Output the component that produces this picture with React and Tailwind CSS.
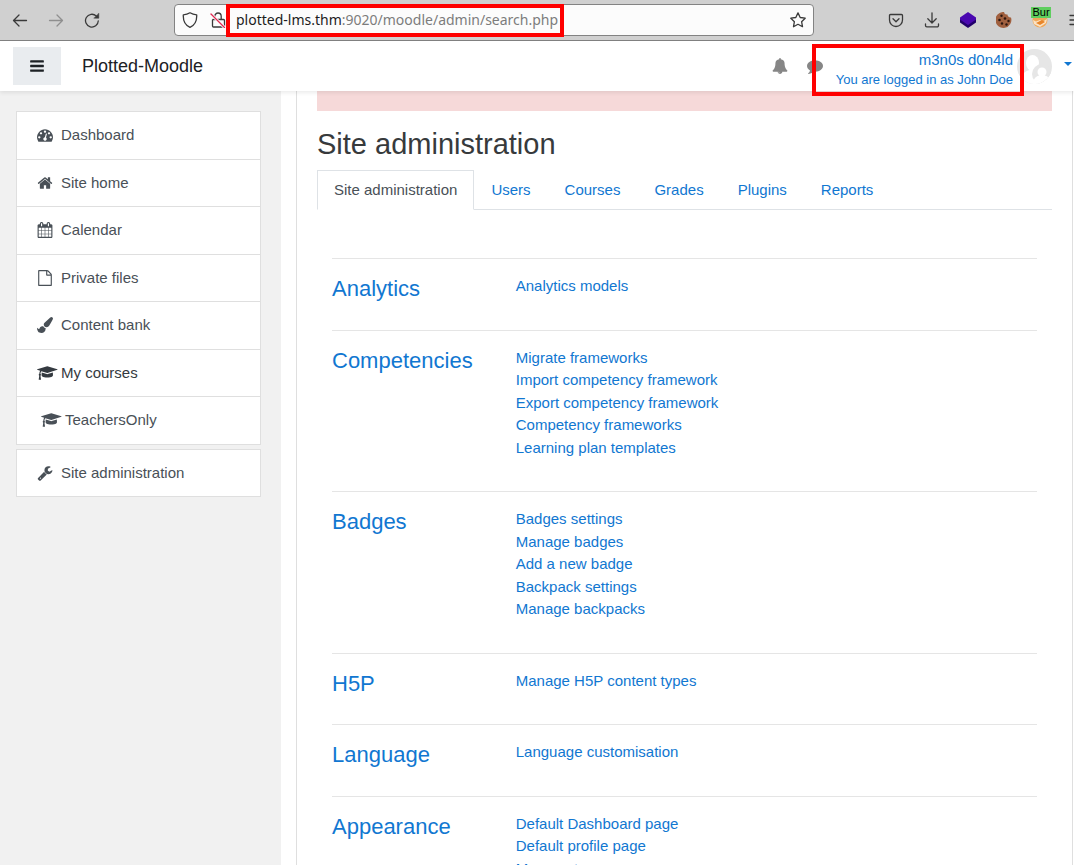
const ICONS = {
  bars: [1792, 'M1664 1344v128q0 26-19 45t-45 19h-1408q-26 0-45-19t-19-45v-128q0-26 19-45t45-19h1408q26 0 45 19t19 45zm0-512v128q0 26-19 45t-45 19h-1408q-26 0-45-19t-19-45v-128q0-26 19-45t45-19h1408q26 0 45 19t19 45zm0-512v128q0 26-19 45t-45 19h-1408q-26 0-45-19t-19-45v-128q0-26 19-45t45-19h1408q26 0 45 19t19 45z'],
  gauge: [1792, 'M384 1152q0-53-37.5-90.5t-90.5-37.5-90.5 37.5-37.5 90.5 37.5 90.5 90.5 37.5 90.5-37.5 37.5-90.5zm192-448q0-53-37.5-90.5t-90.5-37.5-90.5 37.5-37.5 90.5 37.5 90.5 90.5 37.5 90.5-37.5 37.5-90.5zm428 481l101-382q6-26-7.5-48.5t-38.5-29.5-48 6.5-30 39.5l-101 382q-60 5-107 43.5t-63 98.5q-20 77 20 146t117 89 146-20 89-117q16-60-6-117t-72-91zm660-33q0-53-37.5-90.5t-90.5-37.5-90.5 37.5-37.5 90.5 37.5 90.5 90.5 37.5 90.5-37.5 37.5-90.5zm-640-640q0-53-37.5-90.5t-90.5-37.5-90.5 37.5-37.5 90.5 37.5 90.5 90.5 37.5 90.5-37.5 37.5-90.5zm448 192q0-53-37.5-90.5t-90.5-37.5-90.5 37.5-37.5 90.5 37.5 90.5 90.5 37.5 90.5-37.5 37.5-90.5zm320 448q0 261-141 483-19 29-54 29h-1402q-35 0-54-29-141-221-141-483 0-182 71-348t191-286 286-191 348-71 348 71 286 191 191 286 71 348z'],
  home: [1792, 'M1472 992v480q0 26-19 45t-45 19h-384v-384h-256v384h-384q-26 0-45-19t-19-45v-480q0-1 .5-3t.5-3l575-474 575 474q1 2 1 6zm223-69l-62 74q-8 9-21 11h-3q-13 0-21-7l-692-577-692 577q-12 8-24 7-13-2-21-11l-62-74q-8-10-7-23.5t11-21.5l719-599q32-26 76-26t76 26l244 204v-195q0-14 9-23t23-9h192q14 0 23 9t9 23v408l219 182q10 8 11 21.5t-7 23.5z'],
  calendar: [1792, 'M192 1664h288v-288h-288v288zm352 0h320v-288h-320v288zm-352-352h288v-320h-288v320zm352 0h320v-320h-320v320zm-352-384h288v-288h-288v288zm736 736h320v-288h-320v288zm-384-736h320v-288h-320v288zm768 736h288v-288h-288v288zm-384-352h320v-320h-320v320zm-352-864v-288q0-13-9.5-22.5t-22.5-9.5h-64q-13 0-22.5 9.5t-9.5 22.5v288q0 13 9.5 22.5t22.5 9.5h64q13 0 22.5-9.5t9.5-22.5zm736 864h288v-320h-288v320zm-384-384h320v-288h-320v288zm384 0h288v-288h-288v288zm32-480v-288q0-13-9.5-22.5t-22.5-9.5h-64q-13 0-22.5 9.5t-9.5 22.5v288q0 13 9.5 22.5t22.5 9.5h64q13 0 22.5-9.5t9.5-22.5zm384-64v1280q0 52-38 90t-90 38h-1408q-52 0-90-38t-38-90v-1280q0-52 38-90t90-38h128v-96q0-66 47-113t113-47h64q66 0 113 47t47 113v96h384v-96q0-66 47-113t113-47h64q66 0 113 47t47 113v96h128q52 0 90 38t38 90z'],
  file: [1792, 'M1596 380q28 28 48 76t20 88v1152q0 40-28 68t-68 28h-1344q-40 0-68-28t-28-68v-1600q0-40 28-68t68-28h896q40 0 88 20t76 48zm-444-244v376h376q-10-29-22-41l-313-313q-12-12-41-22zm384 1528v-1024h-416q-40 0-68-28t-28-68v-416h-768v1536h1280z'],
  brush: [1792, 'M1615 0q70 0 122.5 46.5t52.5 116.5q0 63-45 151-332 629-465 752-97 91-218 91-126 0-216.5-92.5t-90.5-219.5q0-128 92-212l638-579q59-54 130-54zm-909 1034q39 76 106.5 130t150.5 76l1 71q4 213-129.5 347t-348.5 134q-123 0-218-46.5t-152.5-127.5-86.5-183-29-220q7 5 41 30t62 44.5 59 36.5 46 17q41 0 55-37 25-66 57.5-112.5t69.5-76 88-47.5 103-25.5 125-10.5z'],
  cap: [2304, 'M1774 836l18 316q4 69-82 128t-235 93.5-323 34.5-323-34.5-235-93.5-82-128l18-316 574 181q22 7 48 7t48-7zm530-324q0 23-22 31l-1120 352q-4 1-10 1t-10-1l-652-206q-43 34-71 111.5t-34 178.5q63 36 63 109 0 69-58 107l58 433q2 14-8 25-9 11-24 11h-192q-15 0-24-11-10-11-8-25l58-433q-58-38-58-107 0-73 65-111 11-207 98-330l-333-104q-22-8-22-31t22-31l1120-352q4-1 10-1t10 1l1120 352q22 8 22 31z'],
  wrench: [1792, 'M448 1472q0-26-19-45t-45-19-45 19-19 45 19 45 45 19 45-19 19-45zm644-420l-682 682q-37 37-90 37-52 0-91-37l-106-108q-38-36-38-90 0-53 38-91l681-681q39 98 114.5 173.5t173.5 114.5zm634-435q0 39-23 106-47 134-164.5 217.5t-258.5 83.5q-185 0-316.5-131.5t-131.5-316.5 131.5-316.5 316.5-131.5q58 0 121.5 16.5t107.5 46.5q16 11 16 28t-16 28l-293 169v224l193 107q5-3 79-48.5t135.5-81 70.5-35.5q15 0 23.5 10t8.5 25z'],
  bell: [1792, 'M912 1696q0-16-16-16-59 0-101.5-42.5t-42.5-101.5q0-16-16-16t-16 16q0 73 51.5 124.5t124.5 51.5q16 0 16-16zm816-288q0 52-38 90t-90 38h-448q0 106-75 181t-181 75-181-75-75-181h-448q-52 0-90-38t-38-90q50-42 91-88t85-119.5 74.5-158.5 50-206 19.5-260q0-152 117-282.5t307-158.5q-8-19-8-39 0-40 28-68t68-28 68 28 28 68q0 20-8 39 190 28 307 158.5t117 282.5q0 139 19.5 260t50 206 74.5 158.5 85 119.5 91 88z'],
  comment: [1792, 'M1792 896q0 174-120 321.5t-326 233-450 85.5q-70 0-145-8-198 175-460 242-49 14-114 22-17 2-30.5-9t-17.5-29v-1q-3-4-.5-12t2-10 4.5-9.5l6-9 7-8.5 8-9q7-8 31-34.5t34.5-38 31-39.5 32.5-51 27-59 26-76q-157-89-247.5-220t-90.5-281q0-130 71-248.5t191-204.5 286-136.5 348-50.5 348 50.5 286 136.5 191 204.5 71 248.5z'],
};

function Icon({ name, className = 'h-4' }) {
  const [width, d] = ICONS[name];
  return (
    <svg viewBox={`0 0 ${width} 1792`} className={`${className} w-auto max-w-none shrink-0`} fill="currentColor" aria-hidden="true">
      <path d={d} />
    </svg>
  );
}

function Stroke({ children, className = 'size-4' }) {
  return (
    <svg viewBox="0 0 16 16" className={`${className} shrink-0`} fill="none" stroke="currentColor" strokeWidth="1.3" strokeLinecap="round" strokeLinejoin="round" aria-hidden="true">
      {children}
    </svg>
  );
}

const LINK = 'text-[#1177d1] hover:underline';

function BrowserBar() {
  return (
    <div className="flex h-[41px] shrink-0 items-center border-b border-[#828282] bg-[#d0d0d0] pl-3 text-[#3a3a3a]">
      <div className="flex items-center gap-5">
        <button aria-label="Back">
          <Stroke><path d="M14.500 8.500H1.500M7 3L1.500 8.500 7 14" /></Stroke>
        </button>
        <button aria-label="Forward" className="text-[#8f8f8f]">
          <Stroke><path d="M1.500 8.500h13M9 3l5.500 5.500L9 14" /></Stroke>
        </button>
        <button aria-label="Reload">
          <Stroke><path d="M14.300 8.800A6.400 6.400 0 1 1 12.300 4" /><path d="M14.800 1.500V6.200H10.100z" fill="currentColor" strokeWidth="0.500" /></Stroke>
        </button>
      </div>
      <div className="ml-[74px] flex h-8 w-[640px] shrink-0 items-center rounded border border-[#838383] bg-[#fcfcfc] px-[7px]">
        <Stroke><path d="M8 .8C6 2.100 3.800 2.700 1.300 2.800 1 8.500 2.600 13 8 15.300 13.400 13 15 8.500 14.700 2.800 12.200 2.700 10 2.100 8 .8z" /></Stroke>
        <Stroke className="ml-3 size-4">
          <path d="M4.800 7V4.200a3.200 3.200 0 0 1 6.400 0V7" />
          <path d="M3 7.500h10.500a1 1 0 0 1 1 1V14a1 1 0 0 1-1 1H3.500a1 1 0 0 1-1-1V8" />
          <path d="M1 2l13.500 13.500" stroke="#fcfcfc" strokeWidth="3" />
          <path d="M1 2l13.500 13.500" stroke="#e22850" />
        </Stroke>
        <div className="flex h-[33px] w-[338px] shrink-0 items-center border-4 border-[#ff0000] pl-[6px] font-['Noto_Sans',sans-serif] text-sm whitespace-nowrap text-[#7c7c7c]">
          <span className="text-[#1c1c1c]">plotted-lms.thm</span>:9020/moodle/admin/search.php
        </div>
        <button aria-label="Bookmark" className="ml-auto">
          <Stroke><path d="M8 .9l2.200 4.600 5 .7-3.600 3.500.9 5L8 12.300l-4.500 2.400.9-5L.8 6.200l5-.7z" /></Stroke>
        </button>
      </div>
      <div className="-mr-[10px] ml-auto flex items-center gap-5">
        <button aria-label="Pocket">
          <Stroke><path d="M2.500 2.500h11a1 1 0 0 1 1 1V8a6.500 6.500 0 0 1-13 0V3.500a1 1 0 0 1 1-1z" /><path d="M5 6.800l3 3 3-3" /></Stroke>
        </button>
        <button aria-label="Downloads">
          <Stroke><path d="M8 .8v10M3.800 6.800L8 11l4.200-4.200M1.500 12v1.500a1.300 1.300 0 0 0 1.300 1.300h10.400a1.300 1.300 0 0 0 1.300-1.300V12" /></Stroke>
        </button>
        <button aria-label="Layers extension">
          <svg viewBox="0 0 16 16" className="size-4"><path d="M0 6.500v4L8 16l8-5.500v-4z" fill="#22006b" /><path d="M8 0l8 5.500v2L8 13 0 7.500v-2z" fill="#4a08b0" /></svg>
        </button>
        <button aria-label="Cookie extension">
          <svg viewBox="0 0 16 16" className="size-4">
            <path d="M8 0a3 3 0 0 0 3.500 2.500A3 3 0 0 0 15 5.500 8 8 0 1 1 8 0z" fill="#a0603f" />
            <g fill="#2c1710"><circle cx="5.500" cy="3.800" r="1.200" /><circle cx="9" cy="6.500" r="1.300" /><circle cx="3.500" cy="8" r="1.300" /><circle cx="12.500" cy="9" r="1.200" /><circle cx="6" cy="11.500" r="1.200" /><circle cx="10.500" cy="12.500" r="1.200" /></g>
          </svg>
        </button>
        <button aria-label="Proxy extension" className="relative">
          <svg viewBox="0 0 16 16" className="size-4">
            <circle cx="8" cy="8" r="7.500" fill="#f0a85a" />
            <path d="M1 8l3 1.500L8 8l3 1.500L15 7l-1 4-6 4-6-3z" fill="#fbe3c4" />
            <path d="M4 11l6-3 3 2-5 3z" fill="#e8852a" />
          </svg>
          <span className="absolute -top-[5px] -left-px h-[11px] w-5 overflow-hidden bg-[#5fce5f] text-center text-[11px] leading-[11px] text-black">Bur</span>
        </button>
        <button aria-label="Application menu">
          <Stroke><path d="M2 3.500h12M2 8h12M2 12.500h12" /></Stroke>
        </button>
      </div>
    </div>
  );
}

function Navbar() {
  return (
    <header className="relative z-10 flex h-[50px] shrink-0 items-center bg-white pl-[13px] shadow-[0_2px_4px_rgba(0,0,0,0.08)]">
      <button aria-label="Toggle navigation drawer" className="flex h-[38px] w-12 items-center justify-center bg-[#e9ecef] text-[#1d2125]">
        <Icon name="bars" />
      </button>
      <a href="#" className="ml-[21px] text-lg text-[#1d2125]">Plotted-Moodle</a>
      <div className="ml-auto flex items-center">
        <button aria-label="Notifications" className="text-[#868686]"><Icon name="bell" /></button>
        <button aria-label="Messages" className="ml-[19px] text-[#868686]"><Icon name="comment" /></button>
        <a href="#" className="relative mt-2 -ml-[11px] flex h-[52px] w-[212px] flex-col items-end justify-center border-4 border-[#ff0000] pr-[7px] text-[#1177d1]">
          <span className="text-[15px] leading-5">m3n0s d0n4ld</span>
          <span className="text-[13px] leading-5">You are logged in as John Doe</span>
        </a>
        <svg viewBox="0 0 35 35" className="-ml-[7px] size-[35px]" aria-hidden="true">
          <defs><clipPath id="avatar"><circle cx="17.500" cy="17.500" r="17.500" /></clipPath></defs>
          <g clipPath="url(#avatar)">
            <rect width="35" height="35" fill="#e6e6e6" />
            <ellipse cx="15.500" cy="14" rx="6.500" ry="8" fill="#fff" />
            <path d="M3 35c0-8 4-13 10-14h6v14z" fill="#fff" />
            <circle cx="25" cy="25" r="10" fill="#e6e6e6" />
            <circle cx="25" cy="23" r="4.500" fill="#fff" />
            <path d="M16 35c0-5 3-8 7-8.500h4c4 .5 7 3.500 7 8.500z" fill="#fff" />
          </g>
        </svg>
        <button aria-label="User menu" className="mr-[2px] ml-3 text-[#1177d1]">
          <svg viewBox="0 0 8 4" className="mb-1 h-1 w-2" fill="currentColor"><path d="M0 0h8L4 4z" /></svg>
        </button>
      </div>
    </header>
  );
}

const NAV = [
  ['gauge', 'Dashboard'],
  ['home', 'Site home'],
  ['calendar', 'Calendar'],
  ['file', 'Private files'],
  ['brush', 'Content bank'],
  ['cap', 'My courses', 'text-[#343a40]'],
  ['cap', 'TeachersOnly', 'pl-1 text-[#495057]'],
];

function NavItem({ icon, label, className = 'text-[#495057]' }) {
  return (
    <li className="border-b border-[#dfdfdf]">
      <a href="#" className="block px-5 py-3">
        <span className={`flex items-center gap-2 ${className}`}>
          <span className="flex w-4"><Icon name={icon} /></span>
          {label}
        </span>
      </a>
    </li>
  );
}

function Drawer() {
  return (
    <nav aria-label="Site" className="w-[281px] shrink-0 bg-[#f1f1f1] pt-5 pr-5 pl-4">
      <ul className="border border-b-0 border-[#dfdfdf] bg-white">
        {NAV.map(([icon, label, className]) => (
          <NavItem key={label} icon={icon} label={label} className={className} />
        ))}
      </ul>
      <ul className="mt-1 border border-b-0 border-[#dfdfdf] bg-white">
        <NavItem icon="wrench" label="Site administration" />
      </ul>
    </nav>
  );
}

const TABS = ['Site administration', 'Users', 'Courses', 'Grades', 'Plugins', 'Reports'];

const SECTIONS = [
  ['Analytics', ['Analytics models']],
  ['Competencies', ['Migrate frameworks', 'Import competency framework', 'Export competency framework', 'Competency frameworks', 'Learning plan templates']],
  ['Badges', ['Badges settings', 'Manage badges', 'Add a new badge', 'Backpack settings', 'Manage backpacks']],
  ['H5P', ['Manage H5P content types']],
  ['Language', ['Language customisation']],
  ['Appearance', ['Default Dashboard page', 'Default profile page', 'Manage tags']],
];

function Content() {
  return (
    <main className="mr-px ml-[15px] min-w-0 grow border-x border-[#dfdfdf] bg-white px-5">
      <div className="h-5 bg-[#f6d9d9]" />
      <h1 className="mt-[15px] mb-2 text-[29px] leading-9 text-[#373a3c]">Site administration</h1>
      <ul className="flex border-b border-[#dee2e6] leading-[22px]">
        {TABS.map((tab, i) => (
          <li key={tab} className="-mb-px">
            <a
              href="#"
              className={`block border px-4 py-2 ${i === 0 ? 'border-[#dee2e6] border-b-white bg-white text-[#495057]' : 'border-transparent text-[#1177d1]'}`}
            >
              {tab}
            </a>
          </li>
        ))}
      </ul>
      <div className="px-[15px] pt-8">
        {SECTIONS.map(([title, links]) => (
          <section key={title} className="pt-4">
            <hr className="mb-4 border-t border-black/10" />
            <div className="-mx-[15px] grid grid-cols-4">
              <h2 className="px-[15px] text-[22px] leading-[27px]"><a href="#" className={LINK}>{title}</a></h2>
              <ul className="col-span-3 mb-4 px-[15px]">
                {links.map((link) => (
                  <li key={link}><a href="#" className={LINK}>{link}</a></li>
                ))}
              </ul>
            </div>
          </section>
        ))}
      </div>
    </main>
  );
}

export default function App() {
  return (
    <div className="flex h-screen flex-col overflow-hidden bg-white font-['Liberation_Sans',Arial,sans-serif] text-[15px] leading-normal">
      <BrowserBar />
      <Navbar />
      <div className="flex min-h-0 grow">
        <Drawer />
        <Content />
      </div>
    </div>
  );
}
